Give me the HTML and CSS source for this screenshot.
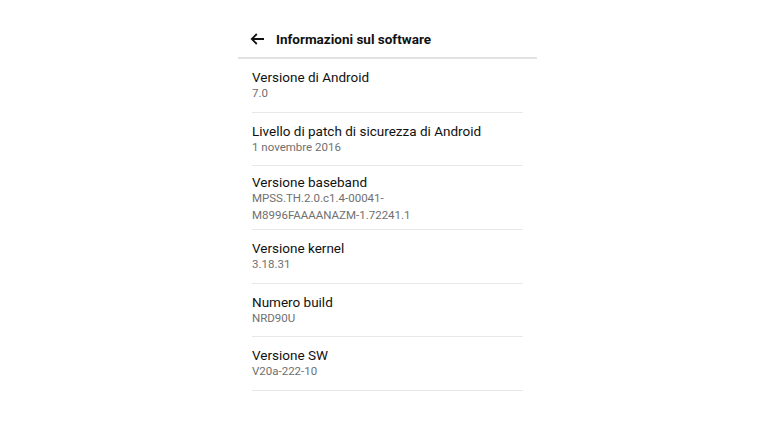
FILE: index.html
```html
<!DOCTYPE html>
<html lang="it">
<head>
<meta charset="utf-8">
<meta name="viewport" content="width=device-width, initial-scale=1.0">
<title>Informazioni sul software</title>
<link rel="stylesheet" href="styles.css">
</head>
<body>
<div class="screen">
  <div class="header">
    <svg class="back" width="14" height="12" viewBox="0 0 14 12"><path d="M14 6H1.8M6.8 1L1.8 6l5 5" fill="none" stroke="#111" stroke-width="1.8"/></svg>
    <span class="title">Informazioni sul software</span>
  </div>
  <div class="list">
    <div class="item">
      <div class="label">Versione di Android</div>
      <div class="value">7.0</div>
    </div>
    <div class="item">
      <div class="label">Livello di patch di sicurezza di Android</div>
      <div class="value">1 novembre 2016</div>
    </div>
    <div class="item multi">
      <div class="label">Versione baseband</div>
      <div class="value">MPSS.TH.2.0.c1.4-00041-<br>M8996FAAAANAZM-1.72241.1</div>
    </div>
    <div class="item">
      <div class="label">Versione kernel</div>
      <div class="value">3.18.31</div>
    </div>
    <div class="item">
      <div class="label">Numero build</div>
      <div class="value">NRD90U</div>
    </div>
    <div class="item">
      <div class="label">Versione SW</div>
      <div class="value">V20a-222-10</div>
    </div>
  </div>
</div>
</body>
</html>
```
FILE: styles.css
```css
body {
margin: 0;
background: #fff;
font-family: Roboto, "Liberation Sans", sans-serif;
color: #111;
}
.screen {
width: 299px;
margin-left: 238px;
}
.header {
display: flex;
align-items: center;
height: 36px;
padding-top: 21px;
padding-left: 12px;
border-bottom: 2px solid #e2e2e2;
}
.back {
display: block;
margin-right: 12px;
}
.title {
font-size: 13.5px;
font-weight: bold;
line-height: 16px;
}
.list {
padding: 0 14px;
}
.item {
padding: 10px 0 9.5px;
border-bottom: 1px solid #e8e8e8;
}
.item.multi {
padding: 8px 0 5px;
}
.label {
font-size: 13.5px;
line-height: 16px;
}
.value {
font-size: 11.5px;
line-height: 17px;
color: #707070;
}
```
